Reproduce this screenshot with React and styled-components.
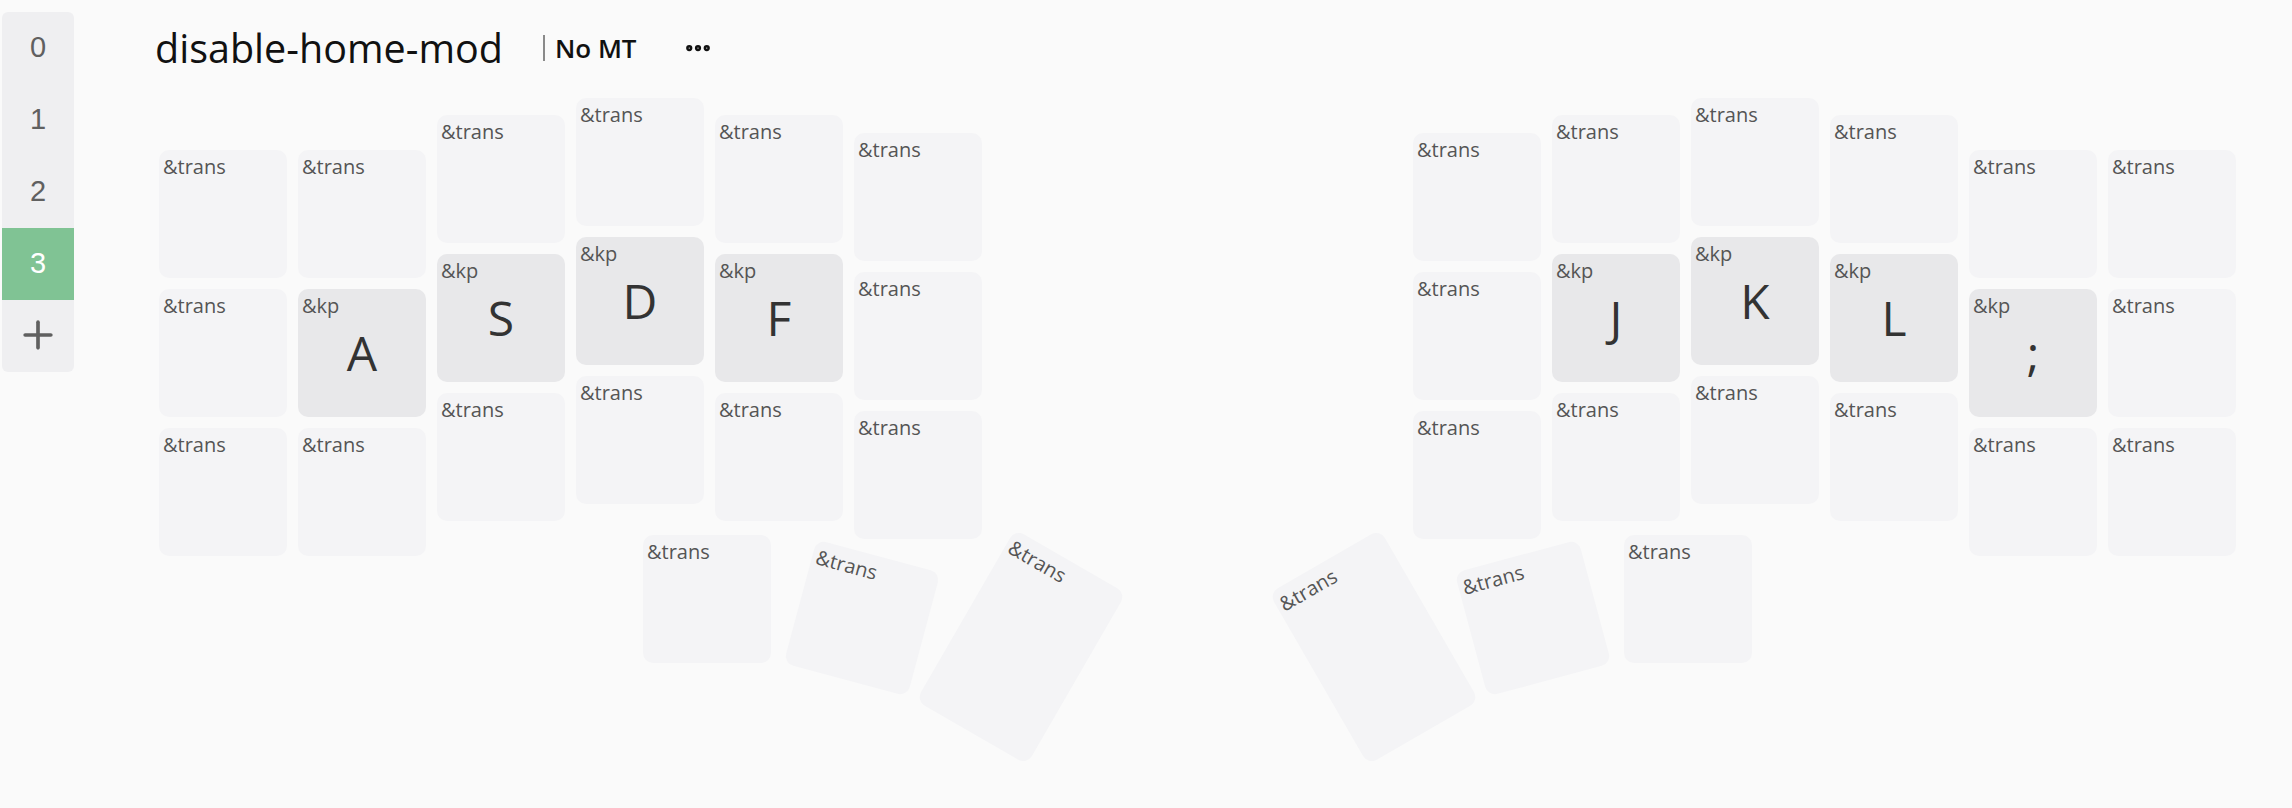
import React from "react";
import styled, { createGlobalStyle } from "styled-components";
import { Ellipsis, Plus } from "lucide-react";

const GlobalStyle = createGlobalStyle`
  html, body {
    margin: 0;
    padding: 0;
    background: #fafafa;
    overflow: hidden;
  }
  body {
    font-family: "Open Sans", "Noto Sans", sans-serif;
    color: #222;
  }
`;

const Page = styled.div`
  display: flex;
  align-items: flex-start;
  min-height: 808px;
`;

const LayerBar = styled.nav`
  display: flex;
  flex-direction: column;
  width: 72px;
  margin: 12px 0 0 2px;
  background: #efeff1;
  border-radius: 6px;
  overflow: hidden;
`;

const LayerItem = styled.button`
  display: flex;
  align-items: center;
  justify-content: center;
  width: 72px;
  height: 72px;
  padding: 0 0 2px;
  border: none;
  background: ${(p) => (p.$active ? "#80c394" : "transparent")};
  color: ${(p) => (p.$active ? "#ffffff" : "#606060")};
  font-family: "Liberation Sans", Arial, sans-serif;
  font-size: 29px;
  cursor: pointer;
`;

const Main = styled.main`
  display: flex;
  flex-direction: column;
  margin-left: 81px;
`;

const Header = styled.header`
  display: flex;
  align-items: center;
  height: 60px;
  margin-top: 18px;
`;

const Title = styled.h1`
  margin: 0;
  font-size: 39.5px;
  font-weight: 500;
  color: #111;
`;

const Divider = styled.span`
  width: 2px;
  height: 26px;
  margin: 0 10px 0 40px;
  background: #8a8a8a;
`;

const Tag = styled.span`
  font-size: 26px;
  font-weight: 600;
  color: #111;
`;

const MenuButton = styled.button`
  display: flex;
  align-items: center;
  margin-left: 46px;
  padding: 0;
  border: none;
  background: none;
  color: #111;
  cursor: pointer;
`;

const Canvas = styled.div`
  position: relative;
  width: 2077px;
  height: 680px;
  margin: 20px 0 0 4px;
`;

const Key = styled.div`
  position: absolute;
  display: flex;
  align-items: center;
  justify-content: center;
  box-sizing: border-box;
  border-radius: 10px;
  background: ${(p) => (p.$bound ? "#e8e8ea" : "#f4f4f6")};
  transform-origin: center;
`;

const Behaviour = styled.span`
  position: absolute;
  top: 3px;
  left: 4px;
  font-size: 20px;
  line-height: 1.36;
  color: #555;
`;

const Legend = styled.span`
  font-size: 48px;
  font-weight: 400;
  color: #333;
  line-height: 1;
`;

const U = 139;
const SIZE = 128;

const leftStagger = [0.375, 0.375, 0.125, 0, 0.125, 0.25];
const rightStagger = [0.25, 0.125, 0, 0.125, 0.375, 0.375];

const leftHome = [null, "A", "S", "D", "F", null];
const rightHome = [null, "J", "K", "L", ";", null];

function buildKeys() {
  const keys = [];
  [0, 1, 2].forEach((row) => {
    leftStagger.forEach((s, col) => {
      const legend = row === 1 ? leftHome[col] : null;
      keys.push({ x: col * U, y: (s + row) * U, w: SIZE, h: SIZE, r: 0, legend });
    });
    rightStagger.forEach((s, col) => {
      const legend = row === 1 ? rightHome[col] : null;
      keys.push({ x: 1254 + col * U, y: (s + row) * U, w: SIZE, h: SIZE, r: 0, legend });
    });
  });

  // thumb cluster, mirrored for the right half
  const thumbs = [
    { x: 484, y: 437, w: SIZE, h: SIZE, r: 0 },
    { x: 639, y: 456, w: SIZE, h: SIZE, r: 15 },
    { x: 798, y: 450, w: SIZE, h: 198, r: 30 },
  ];
  thumbs.forEach((t) => {
    keys.push({ ...t, legend: null });
    keys.push({ ...t, x: 2077 - t.x - t.w, r: -t.r, legend: null });
  });
  return keys;
}

const keys = buildKeys();
const layers = ["0", "1", "2", "3"];

function App() {
  return (
    <>
      <GlobalStyle />
      <Page>
        <LayerBar>
          {layers.map((name) => (
            <LayerItem key={name} $active={name === "3"}>
              {name}
            </LayerItem>
          ))}
          <LayerItem aria-label="Add layer">
            <Plus size={44} strokeWidth={2} />
          </LayerItem>
        </LayerBar>

        <Main>
          <Header>
            <Title>disable-home-mod</Title>
            <Divider />
            <Tag>No MT</Tag>
            <MenuButton aria-label="More">
              <Ellipsis size={30} strokeWidth={3} />
            </MenuButton>
          </Header>

          <Canvas>
            {keys.map((k, i) => (
              <Key
                key={i}
                $bound={!!k.legend}
                style={{
                  left: k.x,
                  top: k.y,
                  width: k.w,
                  height: k.h,
                  transform: k.r ? `rotate(${k.r}deg)` : undefined,
                }}
              >
                <Behaviour>{k.legend ? "&kp" : "&trans"}</Behaviour>
                {k.legend && <Legend>{k.legend}</Legend>}
              </Key>
            ))}
          </Canvas>
        </Main>
      </Page>
    </>
  );
}

export default App;
